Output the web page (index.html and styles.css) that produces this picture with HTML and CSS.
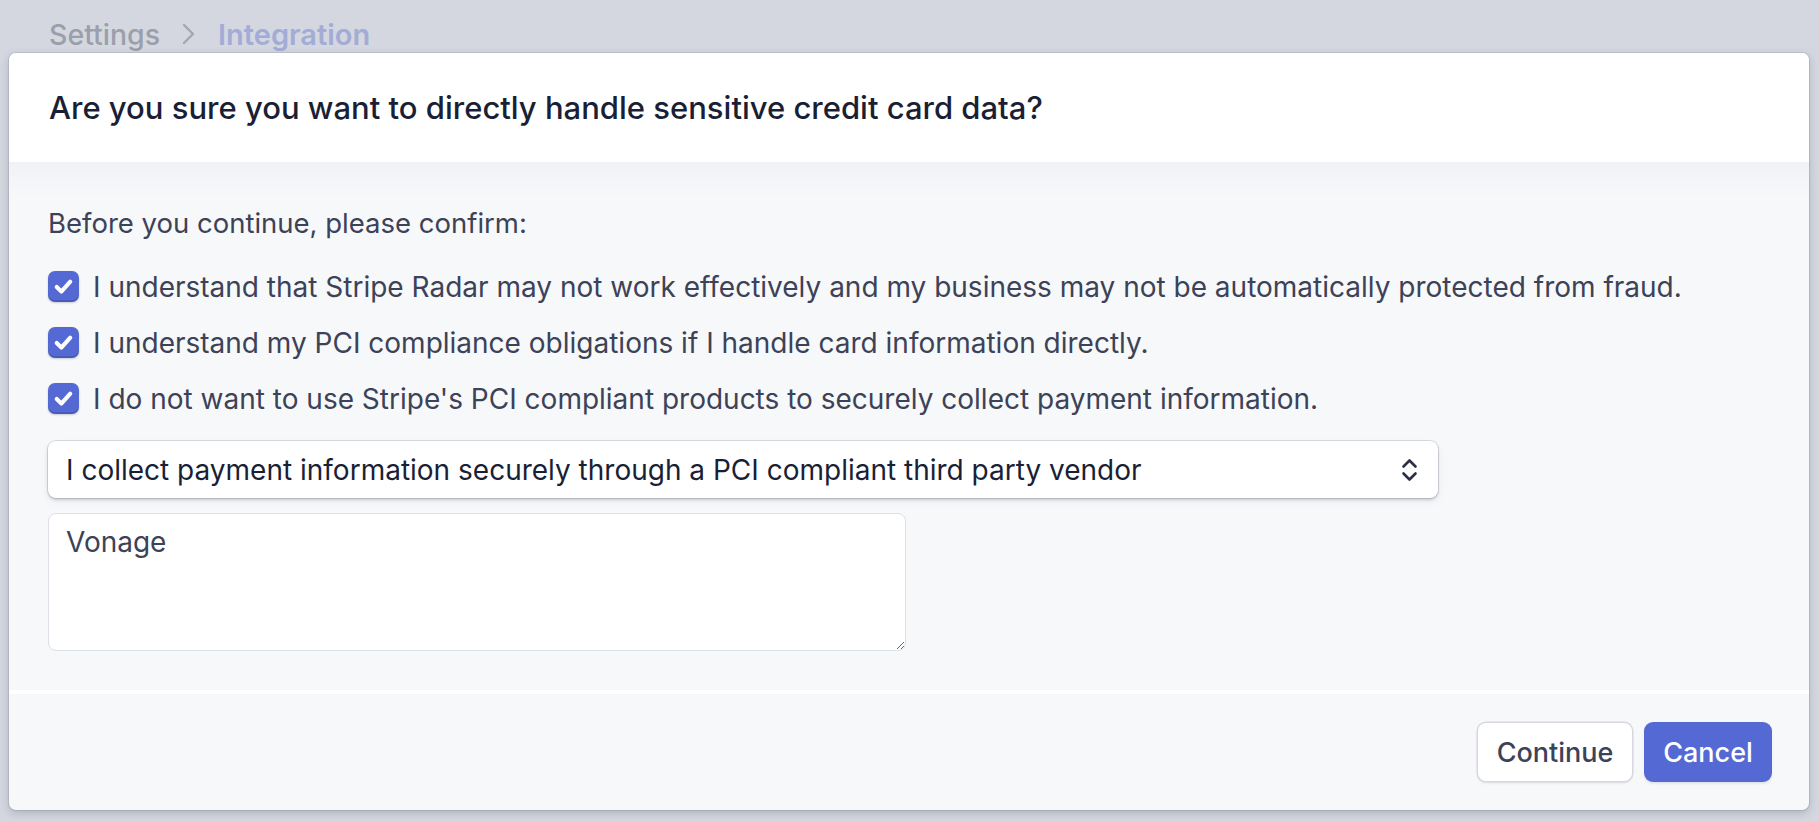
FILE: index.html
```html
<!DOCTYPE html>
<html lang="en">
<head>
<meta charset="utf-8">
<title>Integration</title>
<link rel="stylesheet" href="styles.css">
</head>
<body>
<div class="page">
  <nav class="crumbs">
    <span class="crumb">Settings</span>
    <svg class="crumb-sep" width="14" height="24" viewBox="0 0 14 24"><path d="M2 3 L11 12 L2 21" fill="none" stroke="#a2a7b1" stroke-width="2.4" stroke-linecap="round" stroke-linejoin="round"/></svg>
    <span class="crumb crumb-current">Integration</span>
  </nav>
</div>
<div class="overlay">
  <div class="modal">
    <header class="modal-head">
      <h1 class="modal-title">Are you sure you want to directly handle sensitive credit card data?</h1>
    </header>
    <section class="modal-body">
      <p class="lead">Before you continue, please confirm:</p>
      <ul class="checks">
        <li class="check-row">
          <span class="box"><svg width="31" height="31" viewBox="0 0 32 32"><polyline points="9,16.5 13.8,21.2 23,11" fill="none" stroke="#fff" stroke-width="4.2" stroke-linecap="round" stroke-linejoin="round"/></svg></span>
          <span class="check-label">I understand that Stripe Radar may not work effectively and my business may not be automatically protected from fraud.</span>
        </li>
        <li class="check-row">
          <span class="box"><svg width="31" height="31" viewBox="0 0 32 32"><polyline points="9,16.5 13.8,21.2 23,11" fill="none" stroke="#fff" stroke-width="4.2" stroke-linecap="round" stroke-linejoin="round"/></svg></span>
          <span class="check-label">I understand my PCI compliance obligations if I handle card information directly.</span>
        </li>
        <li class="check-row">
          <span class="box"><svg width="31" height="31" viewBox="0 0 32 32"><polyline points="9,16.5 13.8,21.2 23,11" fill="none" stroke="#fff" stroke-width="4.2" stroke-linecap="round" stroke-linejoin="round"/></svg></span>
          <span class="check-label">I do not want to use Stripe's PCI compliant products to securely collect payment information.</span>
        </li>
      </ul>
      <div class="select">
        <span class="select-text">I collect payment information securely through a PCI compliant third party vendor</span>
        <svg class="select-icon" width="17" height="26" viewBox="0 0 17 26"><path d="M2.5 9.5 L8.5 3.5 L14.5 9.5 M2.5 16.5 L8.5 22.5 L14.5 16.5" fill="none" stroke="#2a2f45" stroke-width="2.6" stroke-linecap="round" stroke-linejoin="round"/></svg>
      </div>
      <textarea class="notes">Vonage</textarea>
    </section>
    <footer class="modal-foot">
      <button class="btn btn-secondary">Continue</button>
      <button class="btn btn-primary">Cancel</button>
    </footer>
  </div>
</div>
</body>
</html>
```

FILE: styles.css
```css
* { box-sizing: border-box; }

html, body {
  margin: 0;
  padding: 0;
}

body {
  width: 1819px;
  height: 822px;
  overflow: hidden;
  background: #d4d7df;
  font-family: Inter, "Noto Sans", "Liberation Sans", sans-serif;
  position: relative;
}

.page {
  padding: 16px 0 0 49px;
}

.crumbs {
  display: flex;
  align-items: center;
  gap: 23px;
  height: 36px;
  font-size: 28.5px;
}

.crumb {
  color: #9a9fab;
  font-weight: 500;
}

.crumb-current {
  color: #a3acd6;
  font-weight: 600;
  font-size: 29px;
}

.crumb-sep {
  margin: 0 -1px;
}

.overlay {
  position: absolute;
  inset: 0;
  padding: 53px 0 0 9px;
}

.modal {
  width: 1800px;
  height: 757px;
  border-radius: 7px;
  overflow: hidden;
  display: flex;
  flex-direction: column;
  background: #f7f8fa;
  box-shadow: 0 0 0 1px rgba(60, 66, 87, 0.12), 0 3px 8px rgba(60, 66, 87, 0.25);
}

.modal-head {
  height: 109px;
  flex: none;
  background: #fff;
  display: flex;
  align-items: center;
  padding: 0 40px;
}

.modal-title {
  margin: 0;
  font-size: 31px;
  font-weight: 500;
  color: #1a1f36;
  letter-spacing: 0;
}

.modal-body {
  height: 528px;
  flex: none;
  padding: 44px 39px 0;
  background: linear-gradient(#f0f2f5, #f7f8fa 36px);
  color: #3c4257;
  font-size: 28px;
}

.lead {
  margin: 0;
  line-height: 34px;
  font-size: 27.5px;
}

.checks {
  list-style: none;
  margin: 31px 0 0;
  padding: 0;
  display: flex;
  flex-direction: column;
  gap: 25px;
}

.check-row {
  display: flex;
  align-items: center;
  gap: 14px;
  height: 31px;
}

.box {
  width: 31px;
  height: 31px;
  flex: none;
  border-radius: 7px;
  background: #5469d4;
  box-shadow: inset 0 -2px 0 rgba(0, 0, 0, 0.12), 0 1px 2px rgba(60, 66, 87, 0.25);
  display: flex;
}

.check-label {
  line-height: 34px;
  white-space: nowrap;
}

.select {
  margin-top: 27px;
  width: 1390px;
  height: 57px;
  background: #fff;
  border-radius: 8px;
  box-shadow: 0 0 0 1px rgba(60, 66, 87, 0.16), 0 2px 3px rgba(60, 66, 87, 0.22), 0 4px 10px rgba(60, 66, 87, 0.06);
  display: flex;
  align-items: center;
  justify-content: space-between;
  padding: 0 20px 0 18px;
  color: #1a1f36;
  font-size: 28px;
}

.select-icon {
  flex: none;
}

.notes {
  display: block;
  margin-top: 15px;
  width: 858px;
  height: 138px;
  border: 1.5px solid #dcdfe5;
  border-radius: 8px;
  background: #fff;
  font-family: inherit;
  font-size: 28px;
  color: #3c4257;
  padding: 11px 17px;
  line-height: 34px;
  resize: both;
  outline: none;
}

.modal-foot {
  flex: 1;
  border-top: 4px solid #fff;
  display: flex;
  justify-content: flex-end;
  align-items: center;
  gap: 13px;
  padding: 0 38px 0 0;
}

.btn {
  height: 58px;
  font-family: inherit;
  font-size: 27px;
  font-weight: 500;
  border-radius: 8px;
  padding: 0 18px;
  border: none;
  cursor: pointer;
}

.btn-secondary {
  background: #fff;
  color: #3c4257;
  box-shadow: 0 0 0 1.5px #d5d8df, 0 2px 3px rgba(60, 66, 87, 0.12);
  width: 154px;
}

.btn-primary {
  background: #5469d4;
  color: #fff;
  box-shadow: 0 0 0 1px #5469d4, 0 2px 3px rgba(60, 66, 87, 0.18);
  width: 126px;
}
```
